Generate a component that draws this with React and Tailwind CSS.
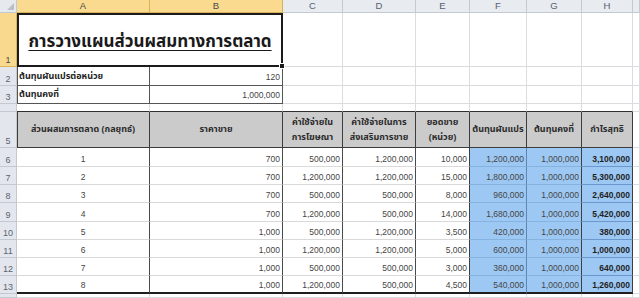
import React from "react";

const GRID = "border-r border-b border-[#dadcdf]";
const COLS = ["A", "B", "C", "D", "E", "F", "G", "H", ""];

const rows = [
  [6, "1", "700", "500,000", "1,200,000", "10,000", "1,200,000", "1,000,000", "3,100,000"],
  [7, "2", "700", "1,200,000", "1,200,000", "15,000", "1,800,000", "1,000,000", "5,300,000"],
  [8, "3", "700", "500,000", "500,000", "8,000", "960,000", "1,000,000", "2,640,000"],
  [9, "4", "700", "1,200,000", "500,000", "14,000", "1,680,000", "1,000,000", "5,420,000"],
  [10, "5", "1,000", "500,000", "1,200,000", "3,500", "420,000", "1,000,000", "380,000"],
  [11, "6", "1,000", "1,200,000", "1,200,000", "5,000", "600,000", "1,000,000", "1,000,000"],
  [12, "7", "1,000", "500,000", "500,000", "3,000", "360,000", "1,000,000", "640,000"],
  [13, "8", "1,000", "1,200,000", "500,000", "4,500", "540,000", "1,000,000", "1,260,000"],
];

function RowHead({ n, active = false }) {
  return (
    <div
      className={`flex items-end justify-center pb-[1px] text-[9px] leading-none border-r border-b ${
        active ? "bg-[#f8d98e] border-[#d9b45a] text-[#4a4a4a]" : "bg-[#e3e7ed] border-[#c3c9d1] text-[#5a6373]"
      }`}
    >
      {n}
    </div>
  );
}

function Blank({ n }) {
  return Array.from({ length: n }, (_, i) => <div key={i} className={`bg-white ${GRID}`} />);
}

function DataRow({ r }) {
  const [n, a, b, c, d, e, f, g, h] = r;
  const last = n === 13;
  const bottom = last ? "border-b-2 border-b-[#1e1e1e]" : "border-b border-b-[#d9d9d9]";
  const blueBottom = last ? "border-b-2 border-b-[#1e1e1e]" : "border-b border-b-[#86b2df]";
  const num = "flex items-end justify-end pr-[2px] pb-[3px] leading-none";
  return (
    <>
      <RowHead n={n} />
      <div className={`bg-white flex items-end justify-center pb-[3px] leading-none border-r border-r-[#4a4a4a] ${bottom}`}>{a}</div>
      <div className={`bg-white ${num} border-r border-r-[#4a4a4a] ${bottom}`}>{b}</div>
      <div className={`bg-white ${num} border-r border-r-[#4a4a4a] ${bottom}`}>{c}</div>
      <div className={`bg-white ${num} border-r border-r-[#4a4a4a] ${bottom}`}>{d}</div>
      <div className={`bg-white ${num} border-r border-r-[#3e3e3e] ${bottom}`}>{e}</div>
      <div className={`bg-[#9dc8f3] ${num} border-r border-r-[#5f86b3] ${blueBottom}`}>{f}</div>
      <div className={`bg-[#9dc8f3] ${num} border-r border-r-[#3e3e3e] ${blueBottom}`}>{g}</div>
      <div className={`bg-[#9dc8f3] ${num} font-bold text-[#1f1f1f] border-r border-r-[#3e3e3e] ${last ? "border-b-2 border-b-[#1e1e1e]" : "border-b border-b-[#6b98cc]"}`}>{h}</div>
      <div className={`bg-white ${GRID}`} />
    </>
  );
}

const THAI = "font-['Noto_Sans_Thai','Tahoma','DejaVu_Sans',sans-serif]";
const HEAD = `bg-[#cbcbcb] flex flex-col items-center justify-center leading-[15px] font-bold text-[#2c2c2c] text-[9px] whitespace-nowrap border-r border-b border-[#3c3c3c] ${THAI}`;
const LABEL = `bg-white flex items-end pl-[2px] pb-[4px] leading-none font-bold text-[9px] text-[#1f1f1f] whitespace-nowrap border-r border-b border-[#555] shadow-[inset_1px_0_0_#555] ${THAI}`;

export default function App() {
  return (
    <div className="w-[640px] h-[298px] overflow-hidden bg-white font-['Liberation_Sans',Arial,sans-serif] text-[8.5px] text-[#454545]">
      <div className="grid h-full grid-cols-[17px_133px_133px_60px_73px_54px_57px_55px_51px_1fr] grid-rows-[13px_54px_19px_18px_8px_36px_19px_18px_18px_19px_18px_18px_18px_18px_1fr]">
        {/* column headers */}
        <div className="bg-[#e6e9ee] border-r border-b border-[#c3c9d1] relative">
          <div className="absolute right-[2px] bottom-[2px] w-0 h-0 border-l-[7px] border-l-transparent border-b-[7px] border-b-[#b9c0ca]" />
        </div>
        {COLS.map((c, i) => (
          <div
            key={i}
            className={`flex items-center justify-center text-[9.5px] leading-none border-r border-b ${
              i < 2 ? "bg-[#f9da8f] border-[#d8b259] text-[#4a4a4a]" : "bg-[#e8ebef] border-[#c3c9d1] text-[#566073]"
            }`}
          >
            {c}
          </div>
        ))}

        {/* row 1 */}
        <RowHead n={1} active />
        <div className="col-span-2 relative bg-white border-2 border-[#1b1b1b] flex items-end justify-center pb-[14px]">
          <span className={`text-[17px] leading-none font-bold whitespace-nowrap underline underline-offset-[3px] text-[#1a1a1a] ${THAI}`}>
            การวางแผนส่วนผสมทางการตลาด
          </span>
          <div className="absolute right-[-4px] bottom-[-4px] w-[6px] h-[6px] bg-[#1b1b1b] border border-white" />
        </div>
        <Blank n={7} />

        {/* row 2 */}
        <RowHead n={2} />
        <div className={LABEL}>ต้นทุนผันแปรต่อหน่วย</div>
        <div className="bg-white flex items-end justify-end pr-[2px] pb-[4px] leading-none border-r border-b border-[#555]">120</div>
        <Blank n={7} />

        {/* row 3 */}
        <RowHead n={3} />
        <div className={LABEL}>ต้นทุนคงที่</div>
        <div className="bg-white flex items-end justify-end pr-[2px] pb-[4px] leading-none border-r border-b border-[#555]">1,000,000</div>
        <Blank n={7} />

        {/* row 4 */}
        <RowHead n="" />
        {Array.from({ length: 8 }, (_, i) => (
          <div key={i} className="bg-white border-r border-r-[#dadcdf] border-b border-b-[#2e2e2e]" />
        ))}
        <div className={`bg-white ${GRID}`} />

        {/* row 5 */}
        <div className="bg-[#e3e7ed] border-r border-b border-[#c3c9d1] text-[#5a6373] text-[9px] leading-none flex items-end justify-center pb-[1px]">5</div>
        <div className={`${HEAD} shadow-[inset_1px_0_0_#3c3c3c]`}>ส่วนผสมการตลาด (กลยุทธ์)</div>
        <div className={HEAD}>ราคาขาย</div>
        <div className={HEAD}>
          <span>ค่าใช้จ่ายใน</span>
          <span>การโฆษณา</span>
        </div>
        <div className={HEAD}>
          <span>ค่าใช้จ่ายในการ</span>
          <span>ส่งเสริมการขาย</span>
        </div>
        <div className={HEAD}>
          <span>ยอดขาย</span>
          <span>(หน่วย)</span>
        </div>
        <div className={HEAD}>ต้นทุนผันแปร</div>
        <div className={HEAD}>ต้นทุนคงที่</div>
        <div className={HEAD}>กำไรสุทธิ</div>
        <div className={`bg-white ${GRID}`} />

        {rows.map((r) => (
          <DataRow key={r[0]} r={r} />
        ))}

        {/* row 14 */}
        <RowHead n="" />
        <Blank n={9} />
      </div>
    </div>
  );
}
